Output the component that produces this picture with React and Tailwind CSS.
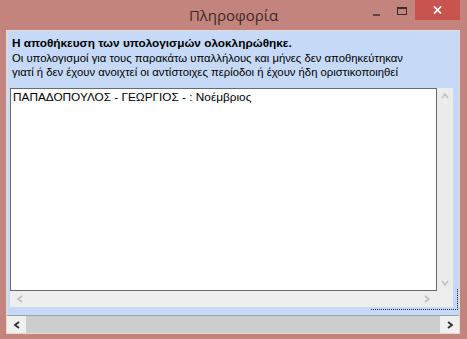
import React from "react";

const Chev = ({ dir = "right", color = "#c0c0c0", size = 8, sw = 1.6 }) => {
  const pts = {
    right: "2,1 6,4 2,7",
    left: "6,1 2,4 6,7",
    up: "1,6 4,2 7,6",
    down: "1,2 4,6 7,2",
  }[dir];
  return (
    <svg width={size} height={size} viewBox="0 0 8 8">
      <polyline points={pts} fill="none" stroke={color} strokeWidth={sw} />
    </svg>
  );
};

export default function App() {
  return (
    <div
      className="w-[467px] h-[339px] bg-[#c2847d] flex flex-col overflow-hidden"
      style={{ fontFamily: '"Liberation Sans", Arial, sans-serif' }}
    >
      {/* title bar */}
      <div className="relative h-[30px] shrink-0 flex items-start justify-center">
        <div
          className="mt-[5px] text-[15px] leading-[20px] text-[#3d2b27]"
          style={{ fontFamily: '"Open Sans", "Noto Sans", sans-serif' }}
        >
          Πληροφορία
        </div>
        <div className="absolute right-[7px] top-0 flex items-start">
          <div className="w-[26px] h-[20px] flex items-center justify-center">
            <div className="w-[7px] h-[2px] bg-[#5b4542] mt-[10px]" />
          </div>
          <div className="w-[26px] h-[20px] flex items-center justify-center">
            <div className="w-[10px] h-[8px] border border-[#3d2b27] border-t-2 mt-[2px]" />
          </div>
          <div className="w-[45px] h-[20px] bg-[#c9534e] flex items-center justify-center">
            <svg width="9" height="8" viewBox="0 0 9 8">
              <path d="M1 0.5 L8 7.5 M8 0.5 L1 7.5" stroke="#ffffff" strokeWidth="1.7" />
            </svg>
          </div>
        </div>
      </div>

      {/* client */}
      <div className="ml-[6px] mr-[7px] mb-[5px] flex-1 flex flex-col border border-[#e9d7d4] bg-[#c6daf8]">
        <div className="relative flex-1 flex flex-col border-b border-[#a3a3a3]">
          <div className="pl-[5px] pt-[5px] text-[11.3px] leading-[14.5px] text-black">
            <div className="font-bold text-[11.8px]">Η αποθήκευση των υπολογισμών ολοκληρώθηκε.</div>
            <div>Οι υπολογισμοί για τους παρακάτω υπαλλήλους και μήνες δεν αποθηκεύτηκαν</div>
            <div>γιατί ή δεν έχουν ανοιχτεί οι αντίστοιχες περίοδοι ή έχουν ήδη οριστικοποιηθεί</div>
          </div>
          <div className="ml-[3px] mt-[8px] w-[443px] h-[219px] grid grid-cols-[427px_16px] grid-rows-[203px_16px]">
            <div className="bg-white border border-[#6a6a6a] pl-[2px] pt-[1px] text-[11.8px] leading-[15px] text-black">
              ΠΑΠΑΔΟΠΟΥΛΟΣ - ΓΕΩΡΓΙΟΣ - : Νοέμβριος
            </div>
            <div className="bg-[#ececec] flex flex-col items-center justify-between py-[4px]">
              <Chev dir="up" />
              <Chev dir="down" />
            </div>
            <div className="bg-[#eeeeee] flex items-center justify-between px-[6px]">
              <Chev dir="left" />
              <Chev dir="right" />
            </div>
            <div className="bg-[#eeeeee]" />
          </div>
          <div className="absolute left-[364px] top-[258px] w-[87px] h-[21px] border-r border-b border-dotted border-[#1a2a4a]" />
        </div>
        <div className="h-[17px] shrink-0 flex bg-[#cdcdcd]">
          <div className="w-[19px] bg-[#f0f0f0] flex items-center justify-center">
            <Chev dir="left" color="#303030" sw={1.8} />
          </div>
          <div className="flex-1" />
          <div className="w-[19px] bg-[#f0f0f0] flex items-center justify-center">
            <Chev dir="right" color="#303030" sw={1.8} />
          </div>
        </div>
      </div>
    </div>
  );
}
